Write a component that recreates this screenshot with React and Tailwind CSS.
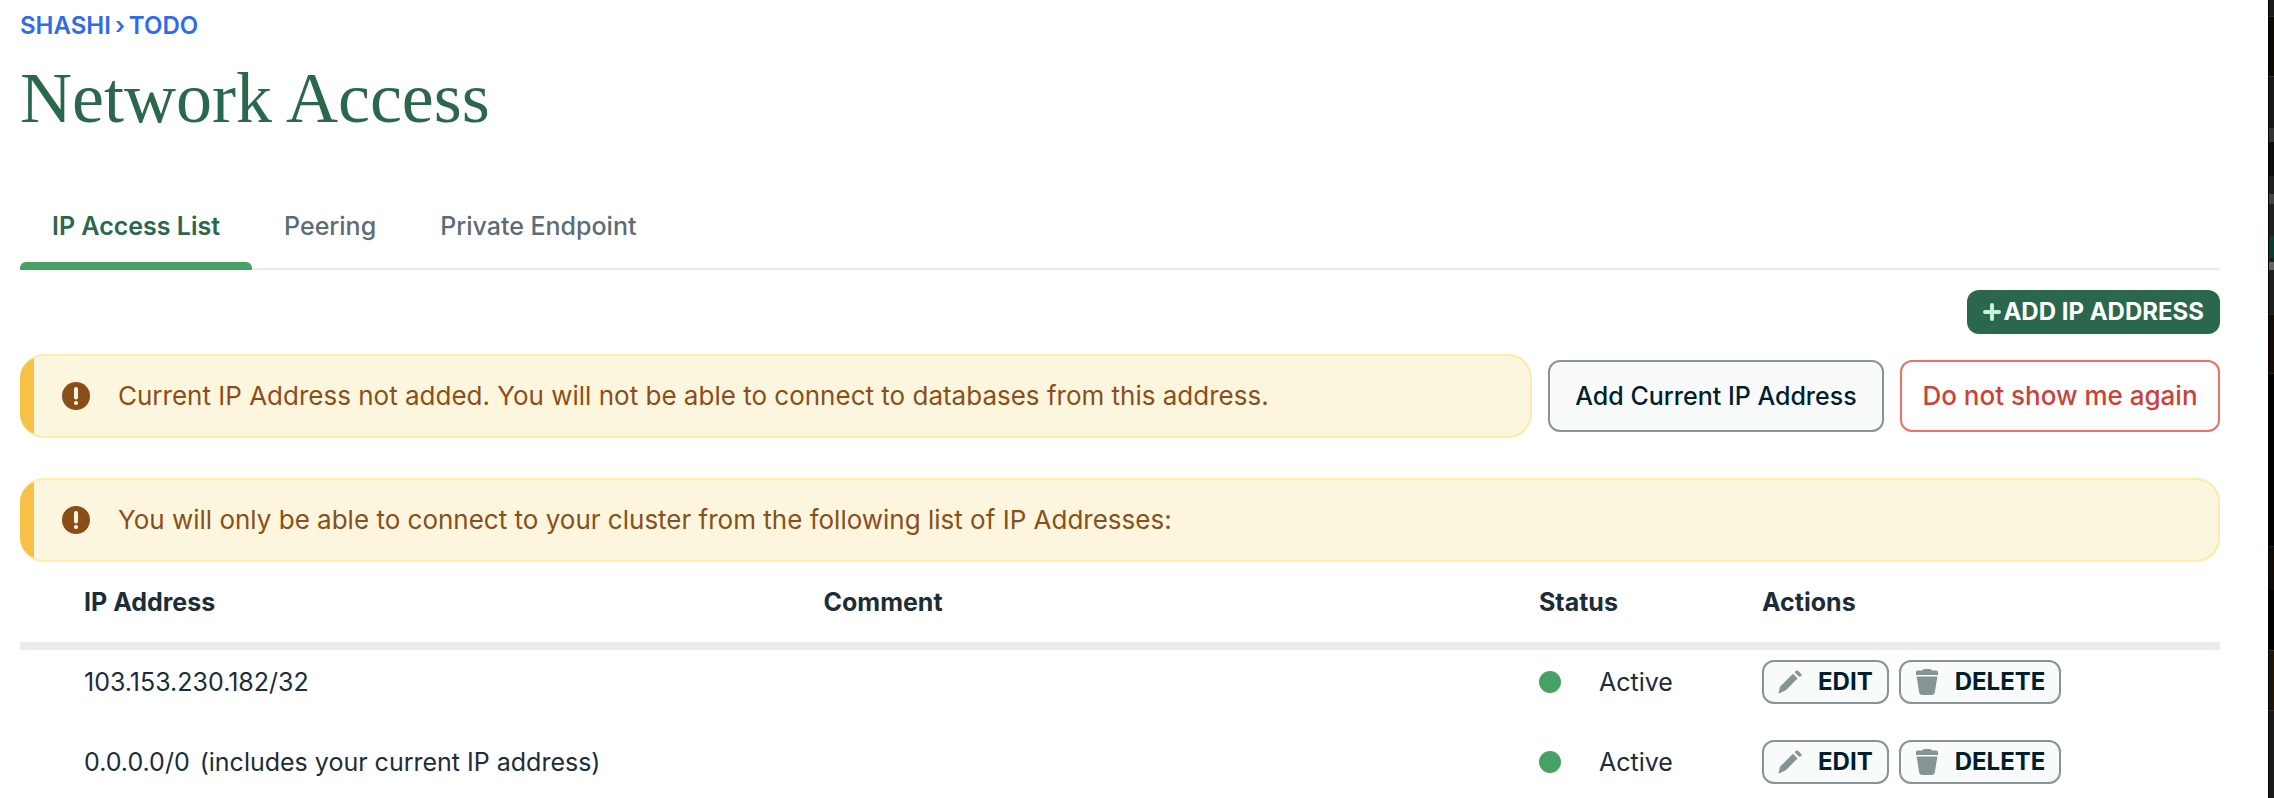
import React from "react";

const entries = [
  { address: "103.153.230.182/32", note: "", status: "Active" },
  { address: "0.0.0.0/0", note: "(includes your current IP address)", status: "Active" },
];

function WarningIcon() {
  return (
    <svg className="size-7 shrink-0" viewBox="0 0 28 28" aria-hidden="true">
      <circle cx="14" cy="14" r="14" fill="#8a4f18" />
      <rect x="12" y="5" width="4" height="12.5" rx="2" fill="#fdf6de" />
      <circle cx="14" cy="21" r="2.1" fill="#fdf6de" />
    </svg>
  );
}

function PencilIcon() {
  return (
    <svg className="size-6 shrink-0" viewBox="0 0 24 24" fill="#889396" aria-hidden="true">
      <path d="M15 3.8 19.6 8.4 7.8 20.2 1 23.4Q0.4 23.6 0.6 23L2 16.8Z" />
      <path d="M16.6 2.2 18 0.8Q19 -0.2 20 0.8L23.2 4Q24.2 5 23.2 6L21.2 6.8Z" />
    </svg>
  );
}

function TrashIcon() {
  return (
    <svg className="h-[26px] w-6 shrink-0" viewBox="-1 0 24 26" fill="#889396" aria-hidden="true">
      <path d="M0 6V3.2Q0 1.6 1.6 1.6H6L7 0.6Q7.6 0 8.4 0H13.6Q14.4 0 15 0.6L16 1.6H20.4Q22 1.6 22 3.2V6Z" />
      <path d="M0.6 7.5H21.4L18.8 23.6Q18.4 26 16 26H6Q3.6 26 3.2 23.6Z" />
    </svg>
  );
}

function PlusIcon() {
  return (
    <svg className="size-[18px] shrink-0" viewBox="0 0 18 18" aria-hidden="true">
      <path d="M9 2V16M2 9H16" stroke="#c3f4d7" strokeWidth="4" strokeLinecap="round" />
    </svg>
  );
}

function Alert({ children }) {
  return (
    <div
      role="alert"
      className="flex h-[84px] grow overflow-hidden rounded-3xl border-2 border-l-0 border-[#fdeba8] bg-[#fdf6de] text-[26px] text-[#8a4f18]"
    >
      <span className="-my-0.5 w-3.5 shrink-0 bg-[#f6c145]" />
      <div className="flex items-center gap-7 pl-7">
        <WarningIcon />
        <p>{children}</p>
      </div>
    </div>
  );
}

function SmallButton({ icon, children }) {
  return (
    <button
      type="button"
      className="flex h-11 items-center gap-4 rounded-xl border-2 border-[#889396] bg-[#f9fbfa] px-3.5 text-2xl font-bold text-[#001e2b]"
    >
      {icon}
      {children}
    </button>
  );
}

export default function App() {
  return (
    <div className="flex min-h-screen bg-white font-[Inter,sans-serif] text-[25px] leading-8 text-[#1c2d38]">
      <main className="min-w-0 grow pl-5 pr-12 pt-2.5">
        <nav aria-label="Breadcrumb" className="flex gap-1 text-2xl leading-8 font-semibold text-[#2e6bee]">
          <a href="#org">SHASHI</a>
          <span>›</span>
          <a href="#project">TODO</a>
        </nav>
        <h1 className="mt-4 font-['Liberation_Serif',serif] text-[72px] leading-20 text-[#2b674c]">Network Access</h1>

        <div role="tablist" className="mt-12 flex h-[84px] border-b-2 border-[#e8edeb] font-medium text-[#5d6c74]">
          <button type="button" role="tab" aria-selected="true" className="relative px-8 pb-0.5 font-semibold text-[#2b674c]">
            IP Access List
            <span className="absolute inset-x-0 -bottom-0.5 h-2 rounded-t-md bg-[#48a164]" />
          </button>
          <button type="button" role="tab" aria-selected="false" className="px-8 pb-0.5">Peering</button>
          <button type="button" role="tab" aria-selected="false" className="px-8 pb-0.5">Private Endpoint</button>
        </div>

        <div className="mt-5 flex justify-end">
          <button type="button" className="flex h-11 items-center gap-0.5 rounded-xl bg-[#2b674c] px-4 text-2xl font-bold text-white">
            <PlusIcon />
            ADD IP ADDRESS
          </button>
        </div>

        <div className="mt-5 flex items-center gap-4">
          <Alert>Current IP Address not added. You will not be able to connect to databases from this address.</Alert>
          <button type="button" className="h-[72px] w-[336px] shrink-0 rounded-xl border-2 border-[#889396] bg-[#f9fbfa] font-medium text-[#001e2b]">
            Add Current IP Address
          </button>
          <button type="button" className="h-[72px] w-80 shrink-0 rounded-xl border-2 border-[#ee7164] bg-white text-[26px] font-medium text-[#cb4239]">
            Do not show me again
          </button>
        </div>

        <div className="mt-10 flex">
          <Alert>You will only be able to connect to your cluster from the following list of IP Addresses:</Alert>
        </div>

        <table className="w-full table-fixed border-collapse text-left">
          <thead>
            <tr className="h-[84px] border-b-8 border-[#e8edeb]">
              <th scope="col" className="pl-16 font-bold">IP Address</th>
              <th scope="col" className="pl-11 font-bold">Comment</th>
              <th scope="col" className="w-[223px] font-bold">Status</th>
              <th scope="col" className="w-[458px] font-bold">Actions</th>
            </tr>
          </thead>
          <tbody className="[&_tr:last-child_td]:pb-3">
            {entries.map((entry) => (
              <tr key={entry.address}>
                <td className="pt-2.5 pb-[26px] pl-16">
                  <span className="mr-2.5">{entry.address}</span>
                  {entry.note}
                </td>
                <td />
                <td className="pt-2.5 pb-[26px]">
                  <span className="flex items-center gap-[38px]">
                    <span className="size-[22px] rounded-full bg-[#48a164]" />
                    {entry.status}
                  </span>
                </td>
                <td className="pt-2.5 pb-[26px]">
                  <div className="flex gap-2.5">
                    <SmallButton icon={<PencilIcon />}>EDIT</SmallButton>
                    <SmallButton icon={<TrashIcon />}>DELETE</SmallButton>
                  </div>
                </td>
              </tr>
            ))}
          </tbody>
        </table>
      </main>

      <div className="flex w-1.5 shrink-0 flex-col border-l border-black bg-black" aria-hidden="true">
        <div className="h-4 bg-[#1a1a18]" />
        <div className="h-15 border-t border-[#2c2b26] bg-[#0e0a02]" />
        <div className="h-13 border-t border-[#333333] bg-[#181816]" />
        <div className="h-3.5 bg-[#333333]" />
        <div className="h-8.5 bg-[#0c0c0a]" />
        <div className="h-4.5 bg-[#1f1f1f]" />
        <div className="h-2.5 bg-[#444444]" />
        <div className="h-8 bg-[#1f1f1f]" />
        <div className="h-5.5 bg-[#0d3a2e]" />
        <div className="h-1 bg-[#1f1f1f]" />
        <div className="h-2 bg-[#666666]" />
        <div className="h-11 bg-[#1d1e1e]" />
        <div className="h-15 border-y border-[#2a2723] bg-[#150b06]" />
        <div className="h-43 bg-black" />
        <div className="h-11 border-t border-[#222222] bg-[#120b05]" />
        <div className="h-15 bg-black" />
        <div className="h-15 border-t border-[#333333] bg-[#201308]" />
        <div className="grow border-t border-[#333333] bg-[#191919]" />
      </div>
    </div>
  );
}
